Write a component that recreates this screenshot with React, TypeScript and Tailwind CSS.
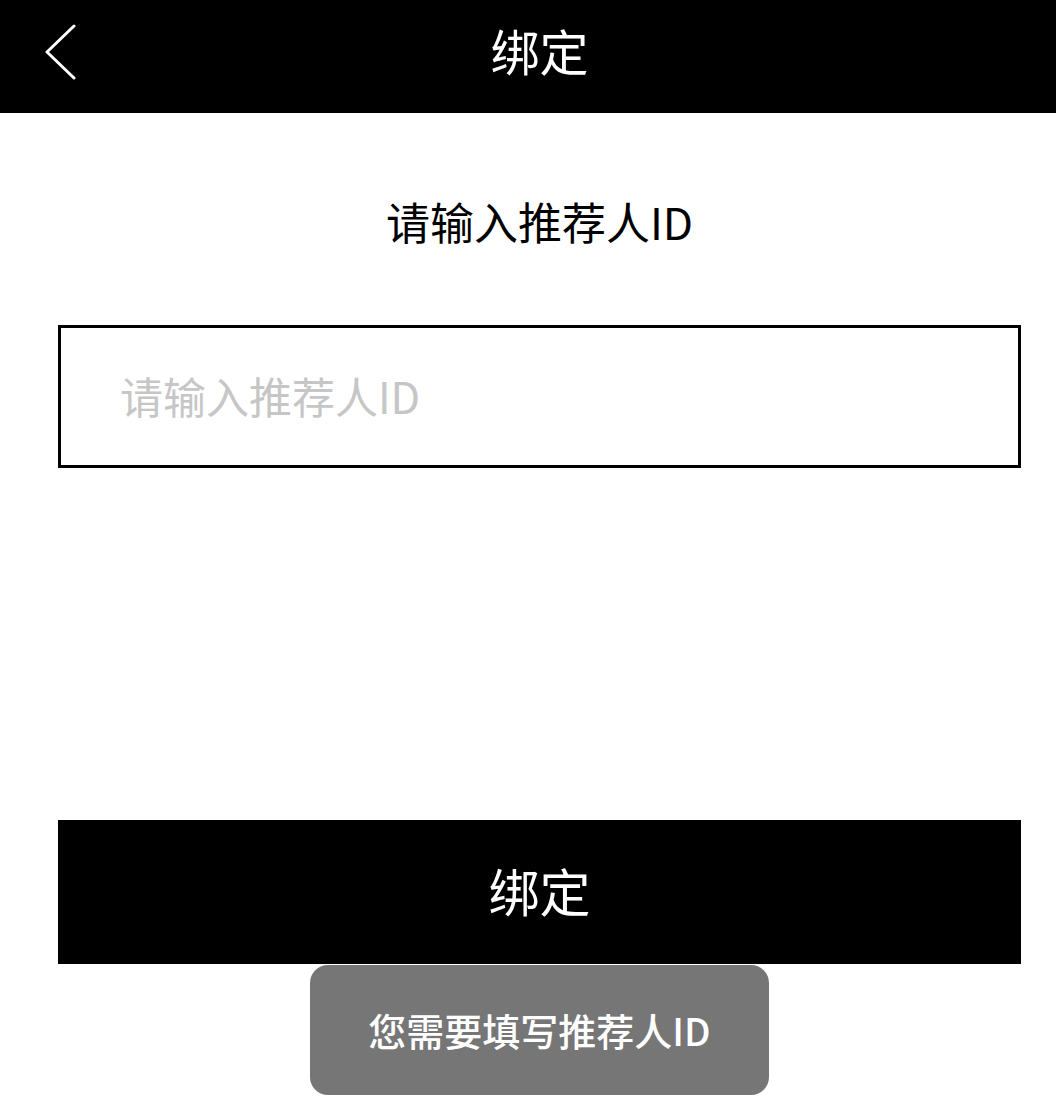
import React from "react";

export default function App() {
  const font = { fontFamily: '"Noto Sans CJK SC", "Noto Sans", sans-serif' };
  return (
    <div className="relative w-[1056px] h-[1115px] bg-white overflow-hidden" style={font}>
      <div className="relative h-[113px] bg-black flex items-center justify-center pl-[23px] pb-[14px]">
        <svg className="absolute left-[43px] top-[24px]" width="34" height="56" viewBox="0 0 34 56" fill="none">
          <path d="M31 2 L4 28 L31 54" stroke="white" strokeWidth="3" strokeLinecap="round" strokeLinejoin="round" />
        </svg>
        <span className="text-white text-[49px] leading-none font-normal">绑定</span>
      </div>
      <div className="flex justify-center mt-[82px] pl-[23px]">
        <span className="text-black text-[44px] leading-[52px]">请输入推荐人ID</span>
      </div>
      <div className="ml-[58px] mr-[35px] mt-[78px] h-[143px] border-[3px] border-black flex items-center pl-[59px]">
        <span className="text-[#c6c6c6] text-[43px] leading-[50px] pb-[4px]">请输入推荐人ID</span>
      </div>
      <div className="ml-[58px] mr-[35px] mt-[352px] h-[144px] bg-black flex items-center justify-center pb-[4px]">
        <span className="text-white text-[51px] leading-none">绑定</span>
      </div>
      <div className="absolute left-[310px] top-[965px] w-[459px] h-[130px] rounded-[18px] bg-[#767676] flex items-center justify-center">
        <span className="text-white text-[38px] leading-none font-medium">您需要填写推荐人ID</span>
      </div>
    </div>
  );
}
